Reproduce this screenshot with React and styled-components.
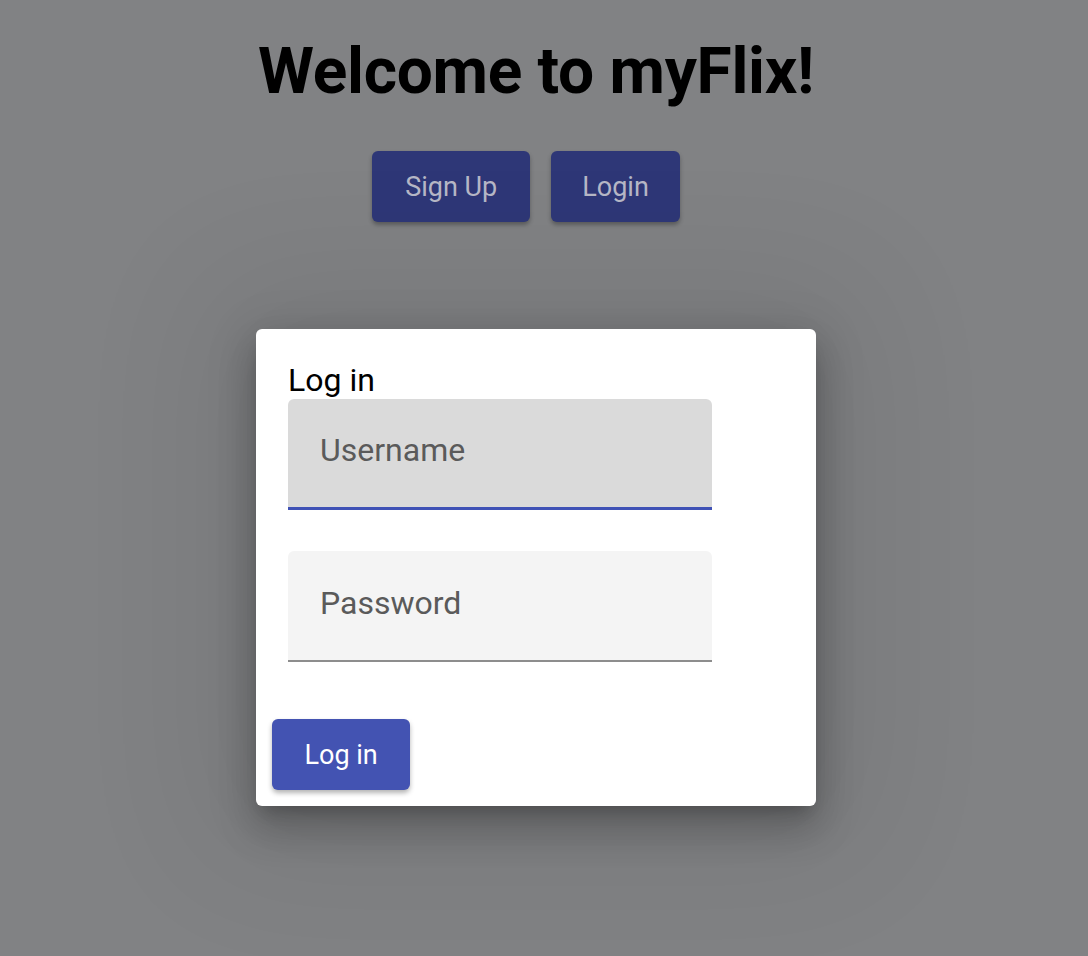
import React from 'react';
import styled, {createGlobalStyle} from "styled-components";

const GlobalStyle = createGlobalStyle`
  html, body {
    margin: 0;
    padding: 0;
    background: #818284;
    font-family: Roboto, "Liberation Sans", sans-serif;
  }
`;

const Page = styled.main`
  min-height: 956px;
  box-sizing: border-box;
  padding-right: 16px;
  display: flex;
  flex-flow: column nowrap;
  align-items: center;
`;

const Heading = styled.h1`
  margin: 34px 0 0;
  font-size: 64px;
  line-height: 75px;
  font-weight: 700;
  letter-spacing: -0.3px;
  color: #000;
`;

const NavRow = styled.div`
  margin-top: 42px;
  display: flex;
  gap: 21px;
  margin-left: -20px;
`;

const NavButton = styled.button`
  height: 71px;
  padding: 0 ${props => props.pad || 33}px;
  border: none;
  border-radius: 6px;
  background: #2e3777;
  color: #b6b7c6;
  font-family: inherit;
  font-size: 27px;
  box-shadow: 0 3px 4px rgba(0, 0, 0, 0.3);
  cursor: pointer;
`;

const Card = styled.section`
  margin-top: 107px;
  width: 560px;
  box-sizing: border-box;
  padding: 16px;
  background: #fff;
  border-radius: 6px;
  box-shadow: 0 11px 15px -7px rgba(0, 0, 0, 0.2),
    0 24px 38px 3px rgba(0, 0, 0, 0.14),
    0 9px 46px 8px rgba(0, 0, 0, 0.12),
    0 0 140px 50px rgba(0, 0, 0, 0.07);
`;

const Form = styled.div`
  padding: 0 16px;
`;

const Title = styled.h2`
  margin: 16px 0 0;
  font-size: 32px;
  line-height: 38px;
  font-weight: 400;
  color: #000;
`;

const Field = styled.input`
  display: block;
  width: 424px;
  height: 111px;
  box-sizing: border-box;
  margin-bottom: ${props => props.gap || 0}px;
  padding: 0 32px 6px;
  border: none;
  border-radius: 6px 6px 0 0;
  border-bottom: ${props => props.focused ? "3px solid #3f51b5" : "2px solid #8d8d8d"};
  background: ${props => props.focused ? "#dadada" : "#f4f4f4"};
  font-family: inherit;
  font-size: 32px;
  color: #222;
  outline: none;

  &::placeholder {
    color: #5a5a5a;
  }
`;

const Actions = styled.div`
  margin-top: 57px;
  display: flex;
`;

const SubmitButton = styled.button`
  height: 71px;
  padding: 0 32.5px;
  border: none;
  border-radius: 6px;
  background: #4353b2;
  color: #fff;
  font-family: inherit;
  font-size: 27px;
  box-shadow: 0 3px 5px rgba(0, 0, 0, 0.3);
  cursor: pointer;
`;

const App = () => {
  return (
    <>
      <GlobalStyle/>
      <Page>
        <Heading>Welcome to myFlix!</Heading>
        <NavRow>
          <NavButton>Sign Up</NavButton>
          <NavButton pad={31}>Login</NavButton>
        </NavRow>
        <Card>
          <Form>
            <Title>Log in</Title>
            <Field focused placeholder="Username" gap={41}/>
            <Field type="password" placeholder="Password"/>
          </Form>
          <Actions>
            <SubmitButton>Log in</SubmitButton>
          </Actions>
        </Card>
      </Page>
    </>
  );
}

export default App;
